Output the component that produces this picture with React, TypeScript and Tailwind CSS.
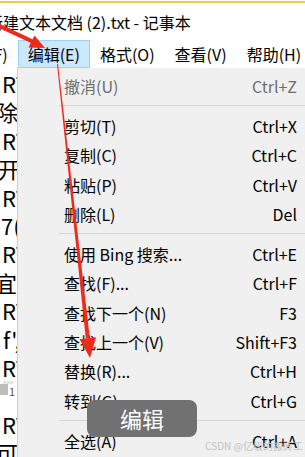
import React from "react";

const FONT = '"Noto Sans CJK SC", "Noto Sans", sans-serif';

type Item = { label: string; key: string; disabled?: boolean } | { sep: true };

const items: Item[] = [
  { label: "撤消(U)", key: "Ctrl+Z", disabled: true },
  { sep: true },
  { label: "剪切(T)", key: "Ctrl+X" },
  { label: "复制(C)", key: "Ctrl+C" },
  { label: "粘贴(P)", key: "Ctrl+V" },
  { label: "删除(L)", key: "Del" },
  { sep: true },
  { label: "使用 Bing 搜索...", key: "Ctrl+E" },
  { label: "查找(F)...", key: "Ctrl+F" },
  { label: "查找下一个(N)", key: "F3" },
  { label: "查找上一个(V)", key: "Shift+F3" },
  { label: "替换(R)...", key: "Ctrl+H" },
  { label: "转到(G)...", key: "Ctrl+G" },
  { sep: true },
  { label: "全选(A)", key: "Ctrl+A" },
];

const leftRows: { t: string; ml: string }[] = [
  { t: "RT", ml: "ml-[2px]" },
  { t: "除", ml: "ml-[-4px]" },
  { t: "RT", ml: "ml-[2px]" },
  { t: "开.", ml: "ml-[-2px]" },
  { t: "RT", ml: "ml-[2px]" },
  { t: "7(", ml: "ml-[1px]" },
  { t: "RT", ml: "ml-[2px]" },
  { t: "宜占", ml: "ml-[-5px]" },
  { t: "RT", ml: "ml-[2px]" },
  { t: "f',", ml: "ml-[3px]" },
  { t: "RT", ml: "ml-[2px]" },
  { t: "", ml: "" },
  { t: "RT", ml: "ml-[2px]" },
  { t: "可", ml: "ml-[-4px]" },
];

export default function App() {
  return (
    <div
      className="relative w-[305px] h-[457px] overflow-hidden bg-white text-black"
      style={{ fontFamily: FONT }}
    >
      {/* top accent */}
      <div className="mt-[1px] h-[2px] bg-[#f2c84b]" />
      {/* title */}
      <div className="h-[37px] flex items-center overflow-hidden whitespace-nowrap text-[16px]">
        <span className="ml-[-13px]">新建文本文档 (2).txt - 记事本</span>
      </div>
      {/* menu bar */}
      <div className="h-[28px] flex items-stretch text-[16px] whitespace-nowrap overflow-hidden">
        <div className="shrink-0 ml-[-54px] px-[9px] border border-transparent flex items-center">文件(F)</div>
        <div className="shrink-0 px-[9px] border border-[#99d1ff] bg-[#cce8ff] flex items-center">编辑(E)</div>
        <div className="shrink-0 px-[9px] border border-transparent flex items-center">格式(O)</div>
        <div className="shrink-0 px-[9px] border border-transparent flex items-center">查看(V)</div>
        <div className="shrink-0 px-[9px] border border-transparent flex items-center">帮助(H)</div>
      </div>
      {/* body */}
      <div className="flex h-[389px]">
        <div className="w-[17px] shrink-0 overflow-hidden pt-[1px] text-[22px] leading-[28.4px] whitespace-nowrap">
          {leftRows.map((r, i) =>
            r.t === "" ? (
              <div key={i} className="h-[28.4px] relative">
                <div className="absolute left-0 top-[3px] w-[8px] h-[11px] bg-[#bdbdbd]" />
                <div className="absolute left-[3px] top-[0px] w-[10px] h-[3px] bg-[#e6e6e6]" />
                <span className="absolute left-[9px] top-[3px] text-[11px] leading-[14px] text-[#555]">1</span>
              </div>
            ) : (
              <div key={i} className="h-[28.4px]">
                <span className={r.ml + " inline-block"}>{r.t}</span>
              </div>
            )
          )}
        </div>
        <div className="flex-1 bg-[#f0f0f0] border-l border-[#cfcfcf] pt-[3px] text-[16px] whitespace-nowrap">
          {items.map((it, i) =>
            "sep" in it ? (
              <div key={i} className="h-[11px] flex items-center pl-[41px]">
                <div className="h-[1px] w-full bg-[#d5d5d5]" />
              </div>
            ) : (
              <div
                key={i}
                className={
                  "h-[29.3px] flex items-center justify-between pl-[46px] pr-[8px] " +
                  (it.disabled ? "text-[#6d6d6d]" : "text-black")
                }
              >
                <span>{it.label}</span>
                <span>{it.key}</span>
              </div>
            )
          )}
        </div>
      </div>

      {/* tooltip */}
      <div className="absolute left-[87px] top-[400px] w-[110px] h-[37px] rounded-[8px] bg-[#717171] flex items-center justify-center text-white text-[22px]">
        编辑
      </div>

      {/* watermark */}
      <div className="absolute right-[2px] top-[440px] text-[10px] leading-[12px] text-[#c4c4c4] whitespace-nowrap">
        CSDN @亿级的搬砖工
      </div>

      {/* arrows */}
      <svg className="absolute left-0 top-0" width="305" height="457" viewBox="0 0 305 457">
        <polygon points="0,24 0,28.5 32,43.5 33,39.5" fill="#ee2a1b" />
        <polygon points="45,48 28.5,47.5 34.5,35.5" fill="#ee2a1b" />
        <polygon points="57,64 58,64 89.8,338 85.8,338.4" fill="#ee2a1b" />
        <polygon points="90,358 79.6,339.2 96,337.2" fill="#ee2a1b" />
      </svg>
    </div>
  );
}
